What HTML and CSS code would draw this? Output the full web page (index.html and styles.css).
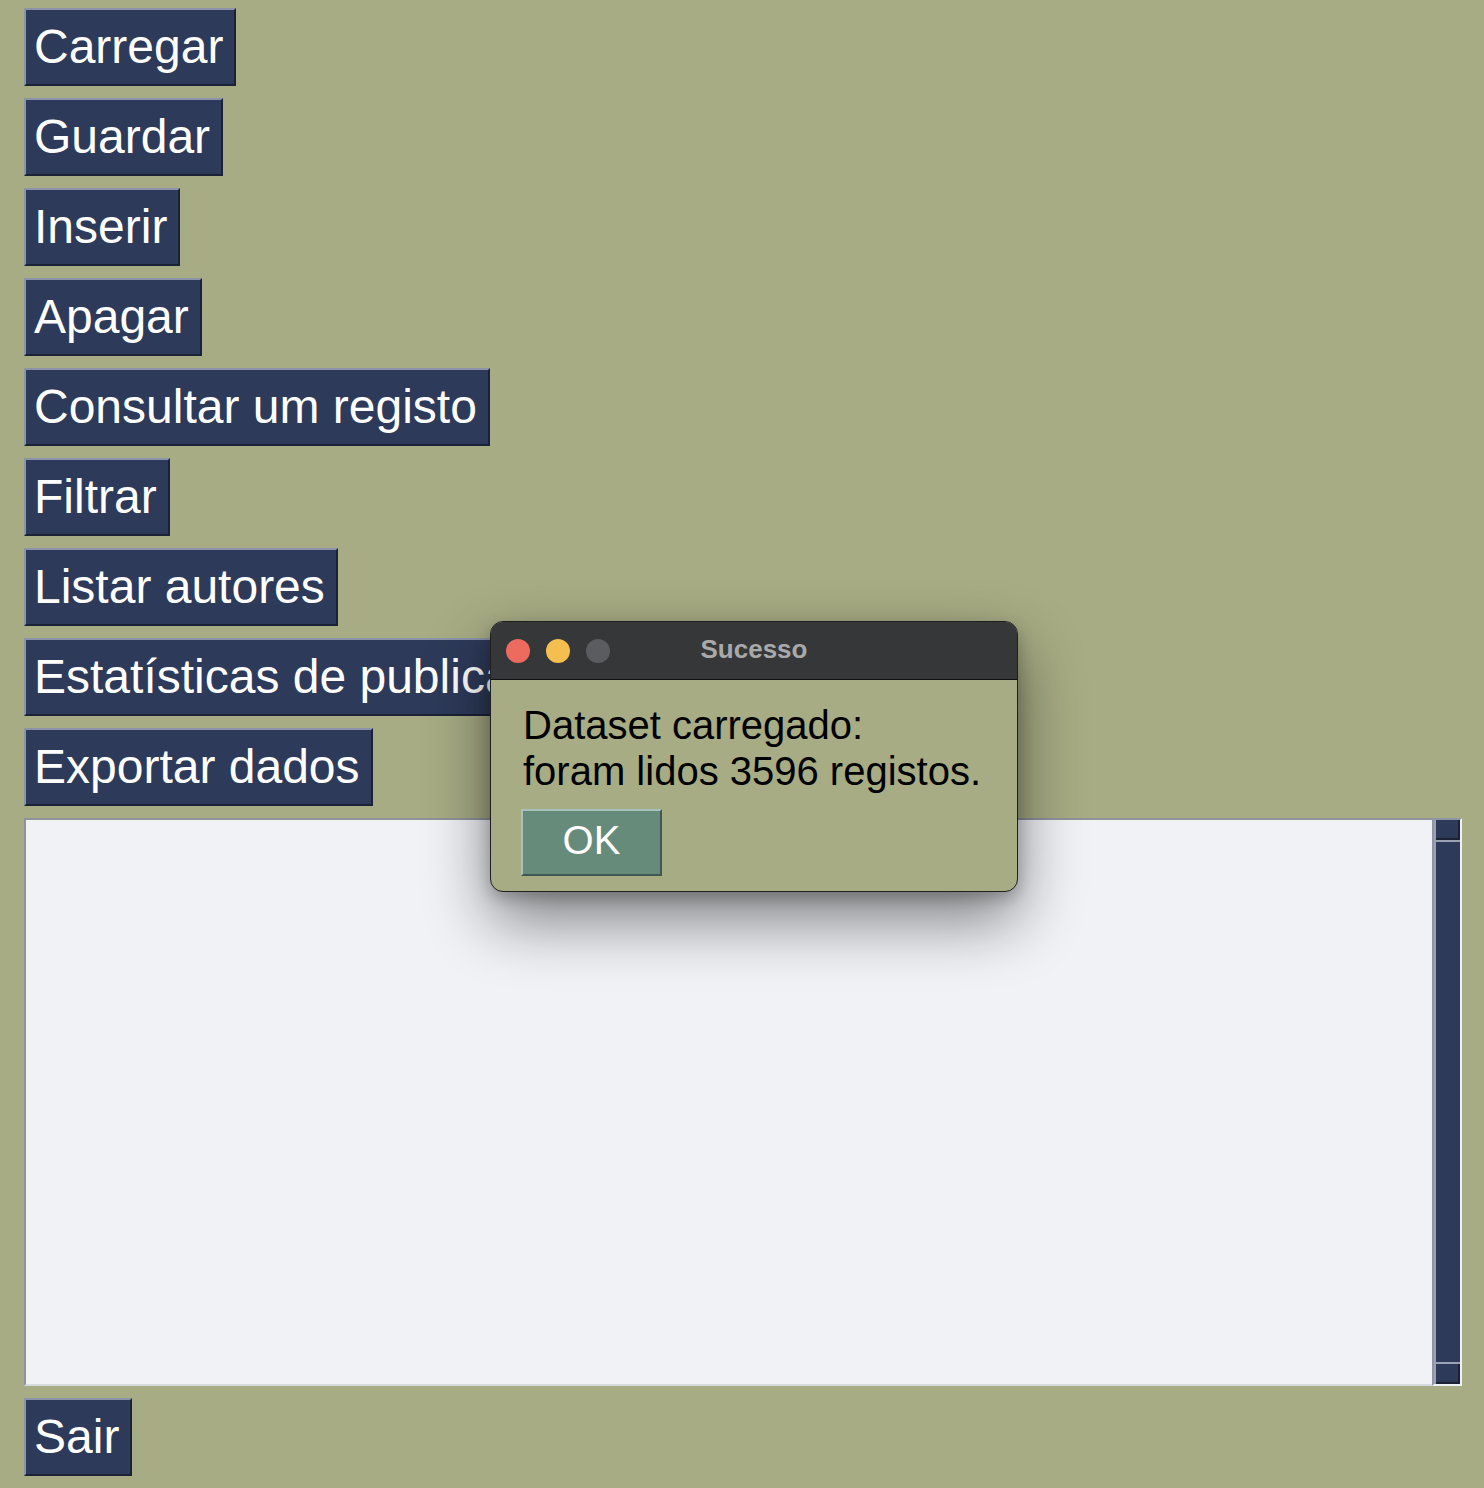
FILE: index.html
```html
<!DOCTYPE html>
<html lang="pt">
<head>
<meta charset="utf-8">
<title>Registos</title>
<link rel="stylesheet" href="styles.css">
</head>
<body>
<div class="app">
  <div class="menu">
    <button class="btn">Carregar</button>
    <button class="btn">Guardar</button>
    <button class="btn">Inserir</button>
    <button class="btn">Apagar</button>
    <button class="btn">Consultar um registo</button>
    <button class="btn">Filtrar</button>
    <button class="btn">Listar autores</button>
    <button class="btn">Estatísticas de publicações</button>
    <button class="btn">Exportar dados</button>
  </div>
  <div class="output">
    <div class="textbox"></div>
    <div class="scrollbar">
      <div class="arrow"></div>
      <div class="trough"></div>
      <div class="arrow"></div>
    </div>
  </div>
  <div class="menu">
    <button class="btn">Sair</button>
  </div>
</div>

<div class="dialog">
  <div class="titlebar">
    <div class="lights">
      <span class="light red"></span>
      <span class="light yellow"></span>
      <span class="light gray"></span>
    </div>
    <div class="title">Sucesso</div>
    <div></div>
  </div>
  <div class="dialog-body">
    <p class="message">Dataset carregado:<br>foram lidos 3596 registos.</p>
    <button class="ok">OK</button>
  </div>
</div>
</body>
</html>
```

FILE: styles.css
```css
html, body {
  margin: 0;
  padding: 0;
}
body {
  background: #a7ac84;
  width: 1484px;
  height: 1488px;
  overflow: hidden;
  font-family: "Liberation Sans", Arial, sans-serif;
  position: relative;
}
.app {
  padding: 8px 22px 0 24px;
  display: flex;
  flex-direction: column;
  gap: 12px;
}
.menu {
  display: flex;
  flex-direction: column;
  align-items: flex-start;
  gap: 12px;
}
.btn {
  font-family: "Liberation Sans", Arial, sans-serif;
  font-size: 48px;
  line-height: 74px;
  height: 78px;
  padding: 0 11px 0 8px;
  margin: 0;
  color: #ffffff;
  background: #2d3a59;
  border-style: solid;
  border-width: 2px;
  border-color: #8b94a9 #1a2236 #1a2236 #8b94a9;
  white-space: nowrap;
  cursor: default;
}
.output {
  display: flex;
  height: 568px;
}
.textbox {
  width: 1408px;
  box-sizing: border-box;
  background: #f0f2f6;
  border-style: solid;
  border-width: 2px 0 2px 2px;
  border-color: #8e939c #d6d9de #d6d9de #8e939c;
}
.scrollbar {
  width: 30px;
  box-sizing: border-box;
  border-style: solid;
  border-width: 2px;
  border-color: #8e95a3 #eef1f6 #eef1f6 #8e95a3;
  background: #2d3a59;
  display: flex;
  flex-direction: column;
  padding: 0 0 0 2px;
  box-shadow: inset 2px 0 0 #9aa3b3;
}
.arrow {
  height: 20px;
  flex: none;
  background: #2d3a59;
  border-right: 2px solid #1a2236;
  border-bottom: 2px solid #1a2236;
  box-sizing: border-box;
}
.trough {
  flex: 1;
  border-top: 2px solid #9aa3b3;
  border-bottom: 2px solid #9aa3b3;
}

.dialog {
  position: absolute;
  left: 490px;
  top: 621px;
  width: 528px;
  height: 271px;
  box-sizing: border-box;
  border: 1px solid #1f1f1f;
  border-radius: 13px;
  background: #a7ac84;
  overflow: hidden;
  box-shadow: 0 28px 64px rgba(0, 0, 0, 0.48), 0 6px 16px rgba(0, 0, 0, 0.22);
}
.titlebar {
  height: 57px;
  background: #363739;
  border-bottom: 1px solid #111111;
  display: grid;
  grid-template-columns: 1fr auto 1fr;
  align-items: center;
}
.lights {
  display: flex;
  gap: 16px;
  padding-left: 15px;
}
.light {
  width: 24px;
  height: 24px;
  border-radius: 50%;
  display: block;
}
.red { background: #ed6a5e; }
.yellow { background: #f5bf4f; }
.gray { background: #5b5c5f; }
.title {
  font-weight: bold;
  font-size: 26px;
  color: #a9a9aa;
  padding-bottom: 2px;
}
.dialog-body {
  padding: 22px 30px 0 30px;
}
.message {
  margin: 0;
  font-size: 40px;
  line-height: 46px;
  color: #000000;
  padding-left: 2px;
}
.ok {
  margin-top: 15px;
  width: 141px;
  height: 67px;
  font-family: "Liberation Sans", Arial, sans-serif;
  font-size: 40px;
  color: #ffffff;
  background: #668b7b;
  border-style: solid;
  border-width: 2px;
  border-color: #a6c2ba #3e5a50 #3e5a50 #a6c2ba;
  padding: 0 0 4px 0;
  cursor: default;
}
```
